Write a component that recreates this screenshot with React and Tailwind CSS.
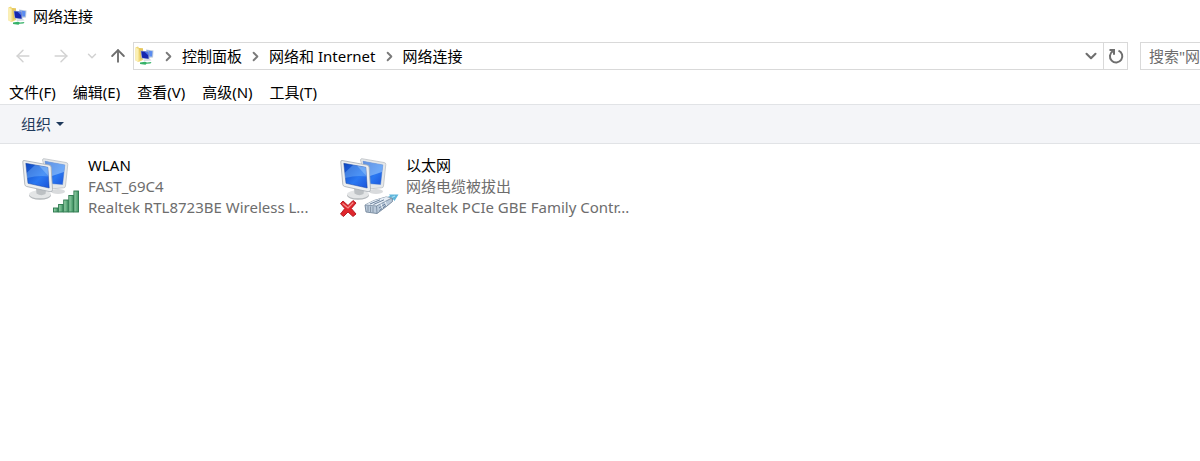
import { ArrowLeft, ArrowRight, ArrowUp, ChevronDown, ChevronRight } from 'lucide-react';

const crumbs = ['控制面板', '网络和 Internet', '网络连接'];

const menus = ['文件(F)', '编辑(E)', '查看(V)', '高级(N)', '工具(T)'];

const adapters = [
  {
    name: 'WLAN',
    status: 'FAST_69C4',
    device: 'Realtek RTL8723BE Wireless L...',
    connected: true,
  },
  {
    name: '以太网',
    status: '网络电缆被拔出',
    device: 'Realtek PCIe GBE Family Contr...',
    connected: false,
  },
];

function FolderIcon() {
  return (
    <svg viewBox="0 0 20 20" className="w-5 h-5 shrink-0" aria-hidden="true">
      <path d="M0.5 1.5L3 0.5L4 2L8 2.5V14L3.5 16L0.5 14.5Z" fill="#f0d878" />
      <path d="M0.5 1.5L3.5 3V16L0.5 14.5Z" fill="#fbf0b4" />
      <path d="M4 2L8 2.5V12L5.5 14Z" fill="#e5c65c" />
      <path d="M11 3.5L18.5 4.5L18 11.5L11 12Z" fill="#b9c8dc" />
      <path d="M12 4.5L17.5 5.2L17 10.5L12 10.5Z" fill="#5a8cf0" />
      <path d="M5.5 4.5L14 5.5L14.5 13.5L6.5 12.5Z" fill="#a9b7d2" />
      <path d="M6.2 5.2L13.2 6.1L13.6 12.7L7.1 11.7Z" fill="#1527b0" />
      <path d="M9.5 5.8L13.2 6.1L13.4 9.5Z" fill="#4c76e8" />
      <path d="M8 13.5L15 13L16.5 14.5L9 15Z" fill="#d3d9e2" />
      <path d="M5 16.5L10 15.8L12 16.5L16.5 16L15.5 17.5L11.5 17.8L10.5 18.8L5 18Z" fill="#35b268" />
    </svg>
  );
}

function RefreshIcon() {
  return (
    <svg viewBox="0 0 18 18" className="w-[18px] h-[18px]" fill="none" stroke="currentColor" strokeWidth="2" aria-hidden="true">
      <path d="M11.500 3.600A6.200 6.200 0 1 1 5.800 4.100" />
      <path d="M2.500 3H7V7.800" />
    </svg>
  );
}

function Monitors() {
  return (
    <>
      <ellipse cx="38" cy="36.500" rx="7" ry="2.500" fill="#d9dbdd" />
      <path d="M24 3.700L46 7.500Q48 7.900 47.800 9.500L45.500 31Q45.200 33 43.500 32.800L30 34L22.500 5Q22.700 3.500 24 3.700Z" fill="#e4e7e9" stroke="#b4b9be" strokeWidth="0.700" />
      <path d="M25 6.300L44.800 9.900L42.600 29.500L30 28.500Z" fill="url(#screen)" stroke="#3b6cc4" strokeWidth="0.400" />
      <path d="M25 6.300L44.800 9.900L44 17L29 22Z" fill="#b4dcff" opacity="0.500" />
      <ellipse cx="20" cy="40.500" rx="11" ry="4.200" fill="#b4b8bb" />
      <ellipse cx="20" cy="39.300" rx="11" ry="4" fill="#e3e5e6" />
      <path d="M16 33L26 35L25.500 39Q21 41.500 16.500 38.500Z" fill="#bcc0c3" />
      <path d="M4 5.500L29 10Q31 10.400 31.100 12L32.500 34.500Q32.500 37.200 30 36.700L6.700 31.500Q5 31.100 4.800 29.500L2.800 7Q2.700 5.300 4 5.500Z" fill="#eceeef" stroke="#a6acb2" strokeWidth="0.800" />
      <path d="M5.800 8.300L27.800 12.300L29.200 33L8 28.300Z" fill="url(#screen)" stroke="#1743a0" strokeWidth="0.500" />
      <path d="M15 10L27.800 12.300L28.400 21.500Q19 20 7 23L6.600 18Z" fill="#8fc8ff" opacity="0.350" />
      <path d="M19 10.700L27.800 12.300L28.400 21Z" fill="#b8deff" opacity="0.350" />
    </>
  );
}

function SignalBars() {
  return (
    <g fill="url(#bar)" stroke="#28764b" strokeWidth="0.900">
      <rect x="33.500" y="53" width="4.600" height="4" />
      <rect x="38.600" y="49.500" width="4.600" height="7.500" />
      <rect x="43.700" y="45" width="4.600" height="12" />
      <rect x="48.800" y="40.500" width="4.600" height="16.500" />
      <rect x="53.900" y="36" width="4.600" height="21" />
    </g>
  );
}

function UnpluggedCable() {
  return (
    <>
      <path d="M2.500 48.500L5 46L10 50.500L15 45.500L18 48L13.300 53.500L18 59L15 61.500L10 57L5.500 61.500L2.500 59L6.800 53.500Z" fill="#e0262c" stroke="#b0131c" strokeWidth="0.900" strokeLinejoin="round" />
      <path d="M4.500 48.500L10 53L15.300 47.500" fill="none" stroke="#f58d8a" strokeWidth="1.200" />
      <path d="M47 43L52 41L51 39.500L60.500 39.500L56.500 46L55.500 44.500L49 48Z" fill="#5fb6dc" />
      <path d="M49 44.500L57 41" stroke="#a9e0f3" strokeWidth="1.200" />
      <path d="M27 50L36 45.500L48 42L54 43L54.500 46.500L49 51L39 58.500L28 57Z" fill="#b9c9da" stroke="#65788f" strokeWidth="0.800" strokeLinejoin="round" />
      <path d="M27 50L36 45.500L48 42L53 43L38.500 51Z" fill="#e6eef6" />
      <path d="M38.500 51L39 58.500M38.500 51L53 43.500M27.500 50L38.500 51" fill="none" stroke="#73869c" strokeWidth="0.800" />
      <path d="M30 51V56.500M32.500 51.500V57M35 51.500V57.500" stroke="#8291a3" strokeWidth="0.900" />
      <path d="M32 49L42 44.800M35.500 49.500L46 44.800M41 53L48 48.500M41.500 55.500L48 50.500" stroke="#5d7592" strokeWidth="0.900" />
      <path d="M43 48.500L44.500 53.500M47 46.500L48.500 50.500" stroke="#f2f7fb" strokeWidth="1" />
    </>
  );
}

function AdapterIcon({ connected }) {
  return (
    <svg viewBox="0 0 62 64" className="w-[62px] h-16 shrink-0" aria-hidden="true">
      <defs>
        <linearGradient id="screen" x1="0" y1="0" x2="1" y2="1">
          <stop offset="0" stopColor="#0d46c0" />
          <stop offset="0.600" stopColor="#2a78f2" />
          <stop offset="1" stopColor="#1c55da" />
        </linearGradient>
        <linearGradient id="bar" x1="0" y1="0" x2="1" y2="0">
          <stop offset="0" stopColor="#9ad4ac" />
          <stop offset="1" stopColor="#3f9463" />
        </linearGradient>
      </defs>
      <Monitors />
      {connected ? <SignalBars /> : <UnpluggedCable />}
    </svg>
  );
}

function Adapter({ name, status, device, connected }) {
  return (
    <button type="button" className="flex items-start gap-[6px] w-[318px] text-left">
      <AdapterIcon connected={connected} />
      <span className="block leading-[21px] whitespace-nowrap text-[#6d6d6d]">
        <span className="block text-black">{name}</span>
        <span className="block">{status}</span>
        <span className="block">{device}</span>
      </span>
    </button>
  );
}

export default function App() {
  return (
    <div className="min-h-screen bg-white text-black text-[15px] font-['Noto_Sans','Noto_Sans_CJK_SC',sans-serif]">
      <header className="flex items-center gap-[5px] h-8 px-2">
        <FolderIcon />
        <h1>网络连接</h1>
      </header>

      <div className="flex items-center h-12">
        <nav className="flex items-center shrink-0 pl-3" aria-label="导航">
          <button type="button" aria-label="后退" className="w-[22px] flex justify-center text-[#d2d2d2]">
            <ArrowLeft size={20} strokeWidth={1.75} />
          </button>
          <button type="button" aria-label="前进" className="w-[22px] ml-4 flex justify-center text-[#d2d2d2]">
            <ArrowRight size={20} strokeWidth={1.75} />
          </button>
          <button type="button" aria-label="最近位置" className="w-4 ml-3 flex justify-center text-[#d2d2d2]">
            <ChevronDown size={14} strokeWidth={2.5} />
          </button>
          <button type="button" aria-label="上移" className="w-5 ml-2 flex justify-center text-[#6e6e6e]">
            <ArrowUp size={20} strokeWidth={2.25} />
          </button>
        </nav>

        <div className="flex flex-1 items-center min-w-0 h-7 ml-[5px] border border-[#d9d9d9]">
          <div className="flex flex-1 items-center min-w-0 pl-px">
            <FolderIcon />
            {crumbs.map((crumb) => (
              <div key={crumb} className="flex items-center shrink-0">
                <ChevronRight size={15} strokeWidth={3} className="mx-[6px] text-[#7a7a7a]" />
                <a href="#">{crumb}</a>
              </div>
            ))}
          </div>
          <button type="button" aria-label="以前的位置" className="w-6 flex justify-center text-[#6e6e6e]">
            <ChevronDown size={18} strokeWidth={2.75} />
          </button>
          <button type="button" aria-label="刷新" className="w-6 h-full flex items-center justify-center border-l border-[#d9d9d9] text-[#6e6e6e]">
            <RefreshIcon />
          </button>
        </div>

        <input
          type="text"
          aria-label="搜索"
          placeholder={'搜索"网络连接"'}
          className="w-[60px] h-7 ml-3 pl-2 shrink-0 border border-r-0 border-[#d9d9d9] placeholder:text-[#6d6d6d]"
        />
      </div>

      <div className="flex items-center gap-[17px] h-6 pl-[9px]">
        {menus.map((menu) => (
          <button key={menu} type="button">{menu}</button>
        ))}
      </div>

      <div className="flex items-center h-10 pl-[21px] bg-[#f4f5f8] border-y border-[#e1e3e6]">
        <button type="button" className="flex items-center gap-[5px] text-[#1e395b]">
          组织
          <svg viewBox="0 0 8 4" className="w-2 h-1" aria-hidden="true">
            <path d="M0 0H8L4 4Z" fill="currentColor" />
          </svg>
        </button>
      </div>

      <main className="flex flex-wrap pl-5 pt-[11px]">
        {adapters.map((adapter) => (
          <Adapter key={adapter.name} {...adapter} />
        ))}
      </main>
    </div>
  );
}
